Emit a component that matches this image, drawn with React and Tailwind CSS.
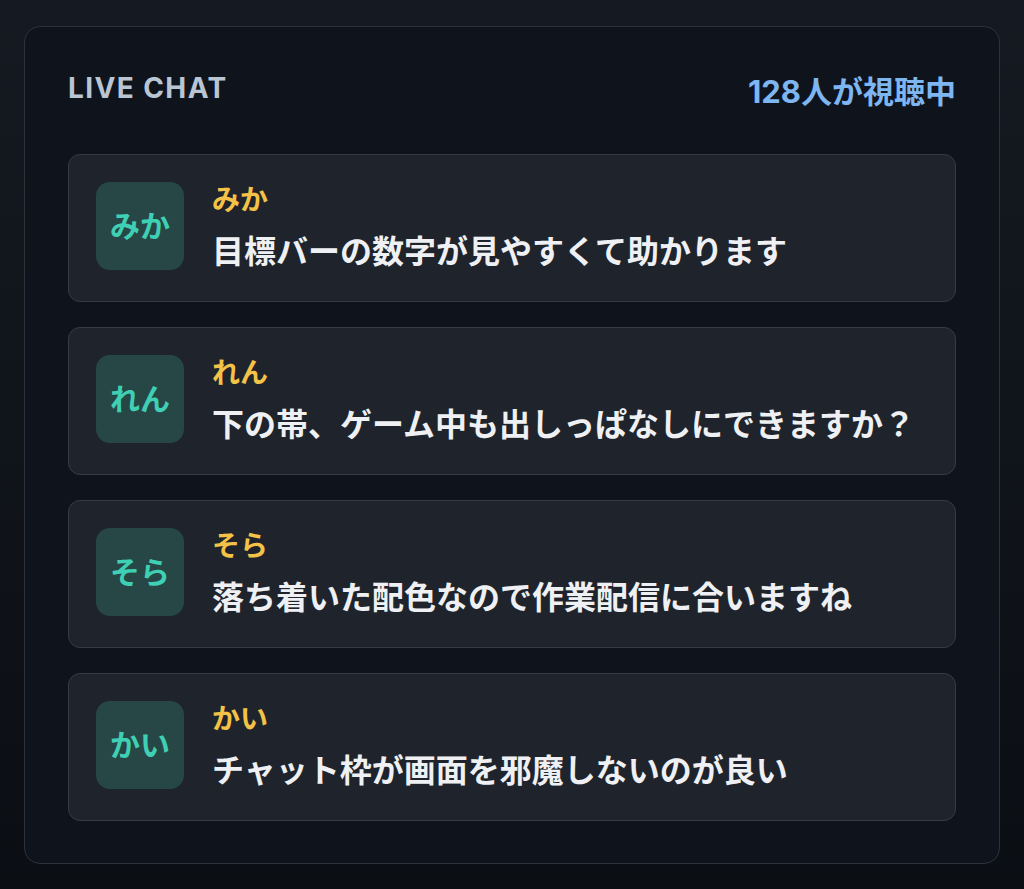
const messages = [
  { name: "みか", text: "目標バーの数字が見やすくて助かります" },
  { name: "れん", text: "下の帯、ゲーム中も出しっぱなしにできますか？" },
  { name: "そら", text: "落ち着いた配色なので作業配信に合いますね" },
  { name: "かい", text: "チャット枠が画面を邪魔しないのが良い" },
];

const ChatRow = ({ name, text }) => (
  <li className="flex items-start gap-[28px] rounded-[12px] border border-[#353b46] bg-[#1f242c] pl-[27px] pr-6 pt-[27px] pb-[29px]">
    <div className="flex h-[88px] w-[88px] shrink-0 items-center justify-center rounded-[14px] bg-[#264745] text-[30px] font-bold text-[#3fcfb4]">
      {name}
    </div>
    <div className="flex min-w-0 flex-col">
      <span className="text-[28px] font-bold leading-[36px] text-[#f4c246]">{name}</span>
      <p className="mt-[14px] text-[32px] font-bold leading-[40px] text-[#eef0f3]">{text}</p>
    </div>
  </li>
);

export default function App() {
  return (
    <div
      className="min-h-[889px] bg-gradient-to-b from-[#151a22] to-[#0b0e13] px-6 pt-[26px] pb-[24px]"
      style={{ fontFamily: '"Inter", "Noto Sans CJK JP", sans-serif' }}
    >
      <section className="rounded-[16px] border-[1.5px] border-[#2b323c] bg-[#0f141c] px-[43px] pt-[43px] pb-[42px]">
        <header className="flex h-[36px] items-center justify-between">
          <h2 className="text-[28px] font-bold tracking-[0.05em] text-[#b9c5d3]">LIVE CHAT</h2>
          <span className="pt-[8px] text-[31px] font-bold text-[#7db6f1]">128人が視聴中</span>
        </header>
        <ul className="mt-[48px] flex flex-col gap-[25px]">
          {messages.map((m) => (
            <ChatRow key={m.name} {...m} />
          ))}
        </ul>
      </section>
    </div>
  );
}
